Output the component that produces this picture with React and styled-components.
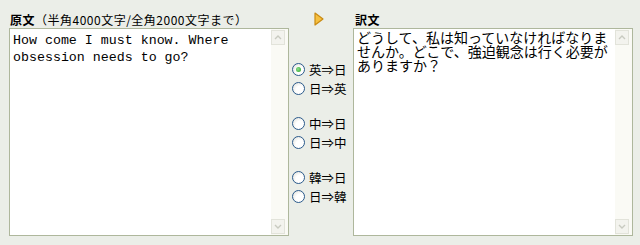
import React, { useState } from 'react'
import styled, { createGlobalStyle } from 'styled-components'

const GlobalStyle = createGlobalStyle`
  html, body {
    margin: 0;
    padding: 0;
    background: #ebeee8;
  }
  body {
    font-family: "Noto Sans CJK JP", "Liberation Sans", sans-serif;
    color: #000;
  }
`

const Page = styled.div`
  display: grid;
  grid-template-columns: 280px 64px 280px;
  grid-template-rows: 17px 208px;
  padding: 11px 0 0 9px;
  height: 245px;
  box-sizing: border-box;
`

const Label = styled.div`
  grid-column: ${p => p.$col};
  grid-row: 1;
  font-size: 12px;
  line-height: 17px;
  padding-left: ${p => p.$indent || 1}px;
  white-space: nowrap;
  letter-spacing: 0.5px;
  b {
    font-weight: bold;
  }
`

const Middle = styled.div`
  grid-row: 1 / span 2;
  grid-column: 2;
  display: flex;
  flex-direction: column;
  padding-left: 3px;
`

const ArrowWrap = styled.div`
  display: flex;
  height: 14px;
  padding-left: 22px;
  margin-top: 1px;
`

const RadioList = styled.div`
  margin-top: 34px;
  display: flex;
  flex-direction: column;
  gap: 16px;
`

const Pair = styled.div`
  display: flex;
  flex-direction: column;
`

const RadioRow = styled.label`
  display: flex;
  align-items: center;
  height: 19px;
  gap: 4px;
  font-size: 12.5px;
  cursor: pointer;
`

const Circle = styled.span`
  width: 11px;
  height: 11px;
  border-radius: 50%;
  border: 1px solid #2a5a8c;
  background: radial-gradient(circle at 65% 65%, #ffffff 40%, #dcdcd4 100%);
  display: flex;
  align-items: center;
  justify-content: center;
  flex: none;
  &::after {
    content: '';
    width: 5px;
    height: 5px;
    border-radius: 50%;
    background: ${p => (p.$on ? 'radial-gradient(circle at 40% 40%, #8ee08e, #21a121)' : 'transparent')};
  }
`

const Box = styled.div`
  display: flex;
  border: 1px solid #aeb79c;
  background: #fff;
  grid-row: 2;
  grid-column: ${p => p.$col};
  box-sizing: border-box;
`

const Area = styled.textarea`
  flex: 1;
  border: none;
  outline: none;
  resize: none;
  overflow: hidden;
  background: #fff;
  margin: 0;
  font-family: ${p => (p.$mono ? '"Liberation Mono", "Noto Sans CJK JP", monospace' : '"Noto Sans CJK JP", "Liberation Sans", sans-serif')};
  font-size: ${p => (p.$mono ? '13.3px' : '14px')};
  line-height: ${p => (p.$mono ? '17px' : '14px')};
  padding: ${p => (p.$mono ? '3px 2px 0 3px' : '1px 2px 0 3px')};
  color: #000;
`

const Scroll = styled.div`
  width: 16px;
  background: #fafaf5;
  display: flex;
  flex-direction: column;
  justify-content: space-between;
  padding: 1px 1px 1px 0;
`

const ScrollBtn = styled.div`
  width: 14px;
  height: 15px;
  box-sizing: border-box;
  border: 1px solid #e2e3da;
  background: #f3f3ee;
  display: flex;
  align-items: center;
  justify-content: center;
`

const Chevron = ({ down }) => (
  <svg width="8" height="5" viewBox="0 0 8 5">
    <path
      d={down ? 'M1 1 L4 4 L7 1' : 'M1 4 L4 1 L7 4'}
      fill="none"
      stroke="#c8cac0"
      strokeWidth="1.4"
    />
  </svg>
)

const ScrollBar = () => (
  <Scroll>
    <ScrollBtn><Chevron /></ScrollBtn>
    <ScrollBtn><Chevron down /></ScrollBtn>
  </Scroll>
)

const groups = [
  ['英⇒日', '日⇒英'],
  ['中⇒日', '日⇒中'],
  ['韓⇒日', '日⇒韓'],
]

export default function App() {
  const [dir, setDir] = useState('英⇒日')
  const [src, setSrc] = useState('How come I must know. Where obsession needs to go?')

  return (
    <>
      <GlobalStyle />
      <Page>
        <Label $col={1}>
          <b>原文</b>（半角4000文字/全角2000文字まで）
        </Label>
        <Middle>
          <ArrowWrap>
            <svg width="10" height="14" viewBox="0 0 10 14">
              <path d="M1 1 L9 7 L1 13 Z" fill="#f6c040" stroke="#c98a12" strokeWidth="1.2" strokeLinejoin="round" />
            </svg>
          </ArrowWrap>
          <RadioList>
            {groups.map((pair, i) => (
              <Pair key={i}>
                {pair.map(d => (
                  <RadioRow key={d} onClick={() => setDir(d)}>
                    <Circle $on={dir === d} />
                    {d}
                  </RadioRow>
                ))}
              </Pair>
            ))}
          </RadioList>
        </Middle>
        <Label $col={3} $indent={2}>
          <b>訳文</b>
        </Label>
        <Box $col={1}>
          <Area $mono value={src} onChange={e => setSrc(e.target.value)} />
          <ScrollBar />
        </Box>
        <Box $col={3}>
          <Area readOnly value="どうして、私は知っていなければなりませんか。どこで、強迫観念は行く必要がありますか？" />
          <ScrollBar />
        </Box>
      </Page>
    </>
  )
}
